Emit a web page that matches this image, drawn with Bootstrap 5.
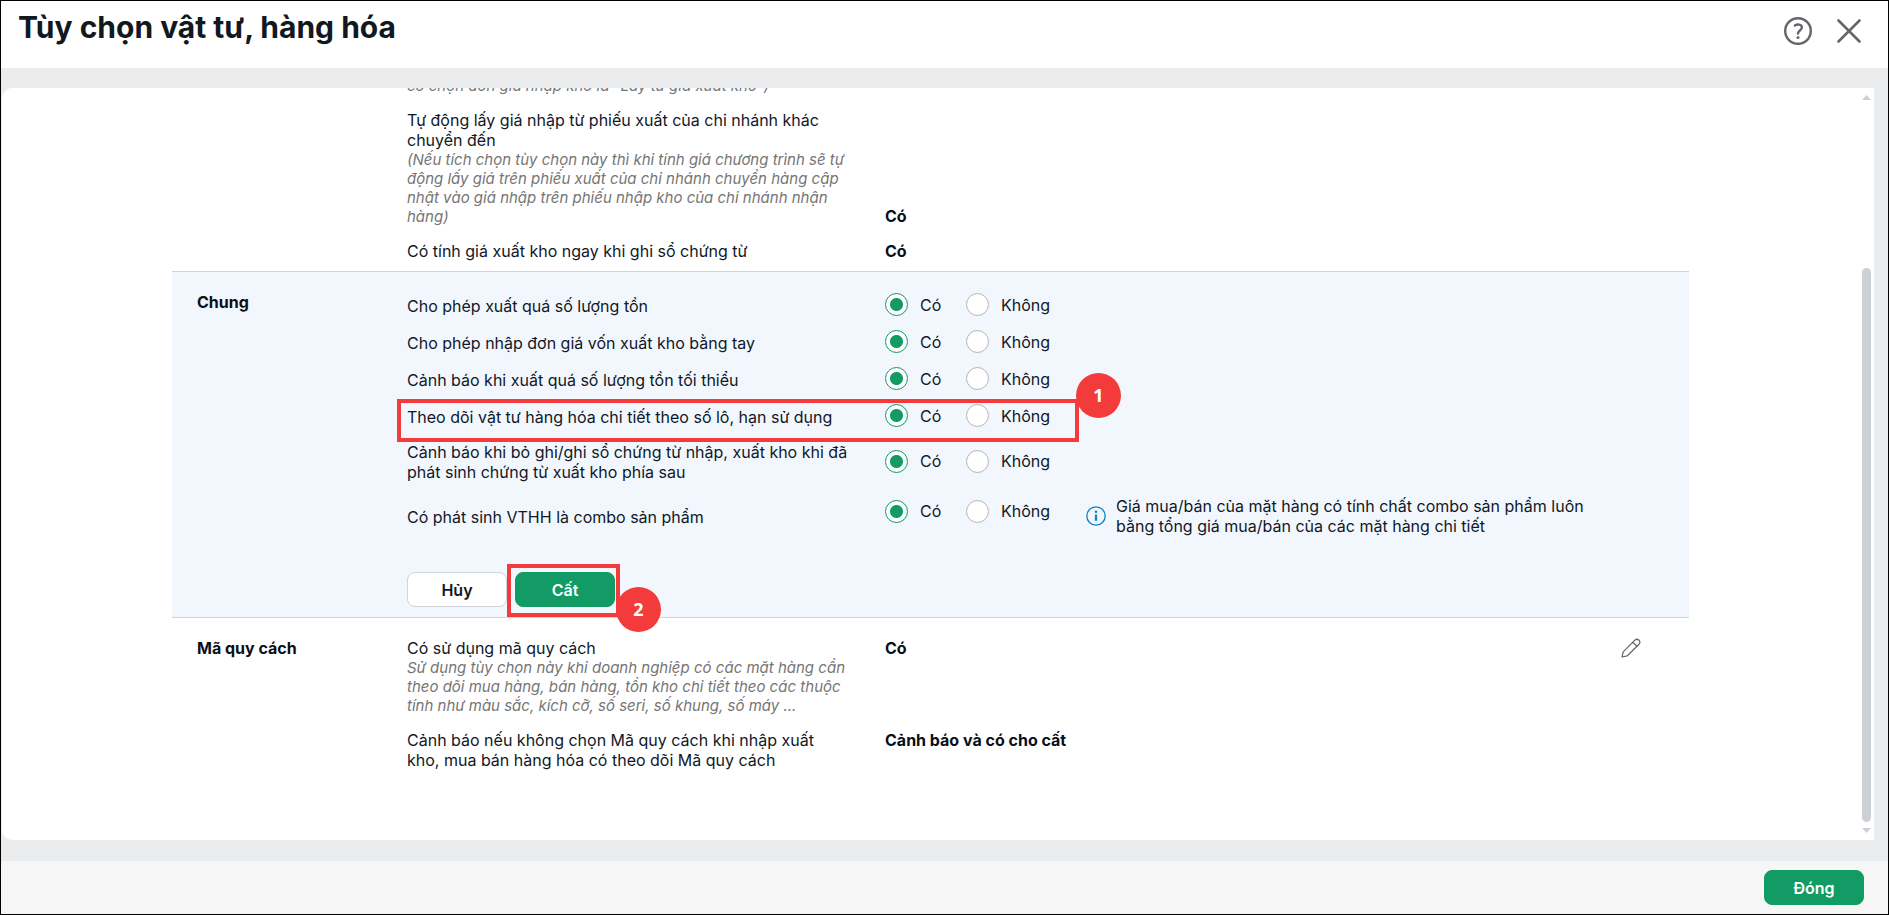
<!DOCTYPE html>
<html lang="vi">
<head>
<meta charset="utf-8">
<meta name="viewport" content="width=device-width, initial-scale=1">
<title>Tùy chọn vật tư, hàng hóa</title>
<link rel="stylesheet" href="https://cdn.jsdelivr.net/npm/bootstrap@5.3.0/dist/css/bootstrap.min.css">
<style>
  body { font-family: Inter, "Noto Sans", sans-serif; font-size: 16px; line-height: 20px; color: #111827; }
  .dialog-frame { border: 1px solid #000; background: #ebecee; }
  .dialog-header { height: 67px; padding: 10px 24px 0 17px; }
  .dialog-title { font-size: 30px; line-height: 32px; font-weight: 700; color: #111820; }
  .header-tools { gap: 20px; }
  .icon-btn { border: 0; background: none; padding: 0; line-height: 0; color: #65666b; }
  .dialog-body { padding: 20px 14px 21px 1px; min-height: 0; }
  .panel { border-radius: 10px 0 0 10px; }
  .panel-content { padding: 0 185px 0 170px; margin-top: -12px; }
  .opt-section { display: grid; grid-template-columns: 210px minmax(0, 1fr); padding: 20px 0 10px 25px; }
  .opt-section.first { padding-top: 0; }
  .opt-section.editing { background: #f2f7fe; border-top: 1px solid #d1d5db; border-bottom: 1px solid #d1d5db; padding-top: 14px; }
  .editing .section-name { padding-top: 6px; }
  .section-name, .opt-value { font-weight: 700; color: #0b0f17; }
  .opt-list { display: flex; flex-direction: column; gap: 15px; }
  .editing .opt-list { gap: 0; }
  .opt-row { display: grid; grid-template-columns: 448px 171px minmax(0, 1fr); column-gap: 30px; position: relative; }
  .editing .opt-row { align-items: center; min-height: 37px; }
  .editing .opt-row.tall { min-height: 54px; }
  .editing .opt-row.combo { min-height: 56px; }
  .opt-text { max-width: 442px; }
  .editing .opt-text { padding-top: 2px; }
  .combo .choices { padding-bottom: 10px; }
  .opt-value { grid-column: 2 / 4; }
  .note { font-size: 15px; line-height: 19px; font-style: italic; color: #757575; }
  .choices label { display: flex; align-items: center; gap: 12px; width: 81px; white-space: nowrap; }
  .choices input { appearance: none; width: 23px; height: 23px; flex: none; margin: 0; border: 1px solid #b4b4b8; border-radius: 50%; background: #fff; }
  .choices input:checked { border-color: #129b64; background: radial-gradient(circle, #129b64 0 6px, #fff 7px); }
  .hint { width: 500px; gap: 10px; }
  .btn-opt { width: 100px; height: 35px; padding: 0; font-size: 16px; line-height: 20px; font-weight: 600; border-radius: 8px; }
  .btn-plain, .btn-plain:hover { background: #fff; border: 1px solid #d1d5db; color: #111827; }
  .btn-main, .btn-main:hover { background: #129b64; border: 1px solid #129b64; color: #fff; }
  .edit-btn { position: absolute; right: 48px; top: 0; }
  .mark-box { position: absolute; border: 4px solid #f43b3b; pointer-events: none; z-index: 1; }
  .mark-row { left: -10px; top: 2px; width: 682px; height: 43px; }
  .mark-save { left: -8px; top: -8px; width: 113px; height: 53px; }
  .mark-num { position: absolute; z-index: 2; width: 45px; height: 45px; border-radius: 50%; background: #f43b3b; color: #fff; font: 700 18px/45px "Open Sans", sans-serif; text-align: center; }
  .mark-one { left: 669px; top: -24px; }
  .mark-two { left: 101px; top: 15px; }
  .scroll-rail { position: absolute; top: 7px; bottom: 7px; right: 3px; width: 9px; color: #cdd0d6; }
  .scroll-thumb { position: absolute; top: 173px; bottom: 11px; width: 9px; border-radius: 5px; background: #cdd0d5; }
  .dialog-footer { height: 53px; padding: 0 24px 0 0; background: #f6f6f6; }
</style>
</head>
<body>
<div class="dialog-frame vh-100 d-flex flex-column overflow-hidden">
  <header class="dialog-header bg-white d-flex justify-content-between align-items-start flex-shrink-0">
    <h1 class="dialog-title m-0">Tùy chọn vật tư, hàng hóa</h1>
    <div class="header-tools d-flex align-items-center pt-1">
      <button class="icon-btn" type="button" aria-label="Trợ giúp">
        <svg width="32" height="32" viewBox="0 0 32 32" fill="none" stroke="currentColor" stroke-width="2.4" stroke-linecap="round"><circle cx="16" cy="16" r="12.8"/><path d="M12.9 10.5C15 9 19.8 9.2 19.9 12.2C19.9 15 16 15.6 16 18.6"/><circle cx="16" cy="22.6" r="1.5" fill="currentColor" stroke="none"/></svg>
      </button>
      <button class="icon-btn" type="button" aria-label="Đóng cửa sổ">
        <svg width="30" height="30" viewBox="0 0 30 30" fill="none" stroke="currentColor" stroke-width="2.6" stroke-linecap="round"><path d="M4.500 4.500L25.500 25.500M25.500 4.500L4.500 25.500"/></svg>
      </button>
    </div>
  </header>

  <main class="dialog-body flex-grow-1">
    <div class="panel bg-white h-100 position-relative overflow-hidden">
      <div class="panel-content">
        <section class="opt-section first">
          <div></div>
          <div class="opt-list">
            <div class="opt-row"><div class="note">có chọn đơn giá nhập kho là "Lấy từ giá xuất kho")</div></div>
            <div class="opt-row">
              <div class="opt-text">Tự động lấy giá nhập từ phiếu xuất của chi nhánh khác chuyển đến
                <div class="note">(Nếu tích chọn tùy chọn này thì khi tính giá chương trình sẽ tự động lấy giá trên phiếu xuất của chi nhánh chuyển hàng cập nhật vào giá nhập trên phiếu nhập kho của chi nhánh nhận hàng)</div>
              </div>
              <div class="opt-value align-self-end">Có</div>
            </div>
            <div class="opt-row">
              <div class="opt-text">Có tính giá xuất kho ngay khi ghi sổ chứng từ</div>
              <div class="opt-value">Có</div>
            </div>
          </div>
        </section>

        <section class="opt-section editing">
          <div class="section-name">Chung</div>
          <form class="opt-list">
            <div class="opt-row">
              <div class="opt-text">Cho phép xuất quá số lượng tồn</div>
              <div class="choices d-flex"><label><input type="radio" name="o1" checked>Có</label><label><input type="radio" name="o1">Không</label></div>
            </div>
            <div class="opt-row">
              <div class="opt-text">Cho phép nhập đơn giá vốn xuất kho bằng tay</div>
              <div class="choices d-flex"><label><input type="radio" name="o2" checked>Có</label><label><input type="radio" name="o2">Không</label></div>
            </div>
            <div class="opt-row">
              <div class="opt-text">Cảnh báo khi xuất quá số lượng tồn tối thiểu</div>
              <div class="choices d-flex"><label><input type="radio" name="o3" checked>Có</label><label><input type="radio" name="o3">Không</label></div>
            </div>
            <div class="opt-row">
              <div class="opt-text">Theo dõi vật tư hàng hóa chi tiết theo số lô, hạn sử dụng</div>
              <div class="choices d-flex"><label><input type="radio" name="o4" checked>Có</label><label><input type="radio" name="o4">Không</label></div>
              <span class="mark-box mark-row"></span>
              <span class="mark-num mark-one">1</span>
            </div>
            <div class="opt-row tall">
              <div class="opt-text">Cảnh báo khi bỏ ghi/ghi sổ chứng từ nhập, xuất kho khi đã phát sinh chứng từ xuất kho phía sau</div>
              <div class="choices d-flex"><label><input type="radio" name="o5" checked>Có</label><label><input type="radio" name="o5">Không</label></div>
            </div>
            <div class="opt-row combo">
              <div class="opt-text">Có phát sinh VTHH là combo sản phẩm</div>
              <div class="choices d-flex"><label><input type="radio" name="o6" checked>Có</label><label><input type="radio" name="o6">Không</label></div>
              <div class="hint d-flex align-items-center">
                <svg class="flex-shrink-0" width="20" height="20" viewBox="0 0 20 20" fill="none" stroke="#0b7fc7"><circle cx="10" cy="10" r="9.200" stroke-width="1.300"/><path d="M10 8.500V14.800" stroke-width="2.200"/><circle cx="10" cy="5.800" r="1.300" fill="#0b7fc7" stroke="none"/></svg>
                <span>Giá mua/bán của mặt hàng có tính chất combo sản phẩm luôn bằng tổng giá mua/bán của các mặt hàng chi tiết</span>
              </div>
            </div>
            <div class="d-flex gap-2 mt-4 pt-1">
              <button type="button" class="btn btn-opt btn-plain">Hủy</button>
              <div class="position-relative">
                <button type="button" class="btn btn-opt btn-main d-block">Cất</button>
                <span class="mark-box mark-save"></span>
                <span class="mark-num mark-two">2</span>
              </div>
            </div>
          </form>
        </section>

        <section class="opt-section">
          <div class="section-name">Mã quy cách</div>
          <div class="opt-list">
            <div class="opt-row">
              <div class="opt-text">Có sử dụng mã quy cách
                <div class="note">Sử dụng tùy chọn này khi doanh nghiệp có các mặt hàng cần theo dõi mua hàng, bán hàng, tồn kho chi tiết theo các thuộc tính như màu sắc, kích cỡ, số seri, số khung, số máy ...</div>
              </div>
              <div class="opt-value">Có</div>
              <button class="icon-btn edit-btn" type="button" aria-label="Sửa">
                <svg width="20" height="20" viewBox="0 0 20 20" fill="none" stroke="currentColor" stroke-width="1.200" stroke-linejoin="round"><path d="M1 19L2.200 13.800L13.800 2.200Q15.900 0.300 18 2.200Q19.800 4.200 18 6.300L6.300 17.800ZM11.800 4.200L16 8.300"/></svg>
              </button>
            </div>
            <div class="opt-row">
              <div class="opt-text">Cảnh báo nếu không chọn Mã quy cách khi nhập xuất kho, mua bán hàng hóa có theo dõi Mã quy cách</div>
              <div class="opt-value">Cảnh báo và có cho cất</div>
            </div>
          </div>
        </section>
      </div>
      <div class="scroll-rail d-flex flex-column justify-content-between" aria-hidden="true">
        <svg width="9" height="5" viewBox="0 0 9 5" fill="currentColor"><path d="M0 5L4.500 0L9 5Z"/></svg>
        <div class="scroll-thumb"></div>
        <svg width="9" height="5" viewBox="0 0 9 5" fill="currentColor"><path d="M0 0L4.500 5L9 0Z"/></svg>
      </div>
    </div>
  </main>

  <footer class="dialog-footer d-flex justify-content-end align-items-center flex-shrink-0">
    <button type="button" class="btn btn-opt btn-main">Đóng</button>
  </footer>
</div>
<script src="https://cdn.jsdelivr.net/npm/bootstrap@5.3.0/dist/js/bootstrap.bundle.min.js"></script>
</body>
</html>
